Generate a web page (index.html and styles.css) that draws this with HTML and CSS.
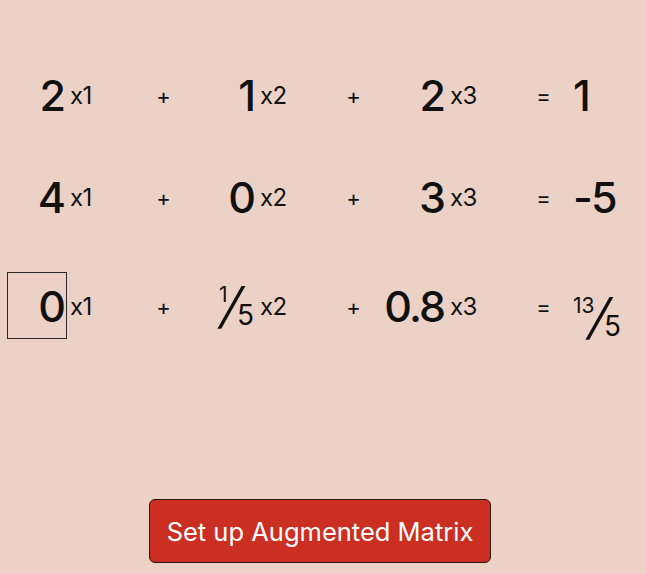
FILE: index.html
```html
<!DOCTYPE html>
<html>
<head>
<meta charset="utf-8">
<link rel="stylesheet" href="styles.css">
</head>
<body>
<main class="page">
  <section class="equations">
    <div class="row row1">
      <div class="coef">2</div><div class="var">x1</div><div class="op">+</div>
      <div class="coef">1</div><div class="var">x2</div><div class="op">+</div>
      <div class="coef">2</div><div class="var">x3</div><div class="op">=</div>
      <div class="result">1</div>
    </div>
    <div class="row row2">
      <div class="coef">4</div><div class="var">x1</div><div class="op">+</div>
      <div class="coef">0</div><div class="var">x2</div><div class="op">+</div>
      <div class="coef">3</div><div class="var">x3</div><div class="op">=</div>
      <div class="result">-5</div>
    </div>
    <div class="row row3">
      <div class="coef focused">0</div><div class="var">x1</div><div class="op">+</div>
      <div class="coef"><span class="frac"><span class="num">1</span><span class="slash">/</span><span class="den">5</span></span></div><div class="var">x2</div><div class="op">+</div>
      <div class="coef">0.8</div><div class="var">x3</div><div class="op">=</div>
      <div class="result"><span class="frac"><span class="num">13</span><span class="slash">/</span><span class="den">5</span></span></div>
    </div>
  </section>
  <div class="actions">
    <button class="primary">Set up Augmented Matrix</button>
  </div>
</main>
</body>
</html>
```

FILE: styles.css
```css
html, body {
  margin: 0;
  padding: 0;
  background: #ecd2c6;
}
body {
  width: 646px;
  height: 574px;
  overflow: hidden;
  font-family: Inter, "Noto Sans", sans-serif;
  color: #111;
}
.page {
  display: flex;
  flex-direction: column;
}
.equations {
  display: flex;
  flex-direction: column;
  padding-left: 7px;
  padding-top: 61px;
}
.row {
  display: grid;
  grid-template-columns: 60px 63px 67px 60px 63px 67px 60px 63px 67px auto;
  align-items: center;
  height: 67px;
}
.row2 { margin-top: 35px; }
.row3 { margin-top: 41px; }
.coef {
  box-sizing: border-box;
  height: 67px;
  display: flex;
  align-items: center;
  justify-content: flex-end;
  padding-right: 3px;
  font-size: 43px;
  font-weight: 500;
  letter-spacing: -2px;
}
.coef.focused {
  border: 1px solid #2a2a2a;
  padding-right: 2px;
}
.var {
  font-size: 24px;
  padding-left: 3px;
  padding-top: 2px;
  letter-spacing: -0.5px;
}
.op {
  text-align: center;
  font-size: 22px;
  padding-top: 2px;
}
.result {
  font-size: 43px;
  font-weight: 500;
  letter-spacing: -2px;
  margin-left: -4px;
}
.frac {
  display: inline-flex;
  align-items: stretch;
  height: 46px;
  font-weight: 400;
  letter-spacing: 0;
}
.num {
  font-size: 21px;
  line-height: 21px;
  align-self: flex-start;
  margin-top: 1px;
  margin-right: -4px;
}
.slash {
  font-family: "DejaVu Sans", sans-serif;
  font-size: 52px;
  line-height: 46px;
  font-weight: 400;
  transform: skewX(-16deg) scaleX(0.9);
}
.den {
  font-size: 28px;
  line-height: 28px;
  align-self: flex-end;
  margin-left: -4px;
}
.actions {
  display: flex;
  justify-content: center;
  padding-top: 161px;
  padding-right: 6px;
}
.primary {
  width: 342px;
  height: 64px;
  background: #cb2f22;
  border: 1px solid #2a1512;
  border-radius: 6px;
  color: #fff;
  font-family: Inter, "Noto Sans", sans-serif;
  font-size: 25.5px;
  font-weight: 400;
  padding: 0;
}
```
